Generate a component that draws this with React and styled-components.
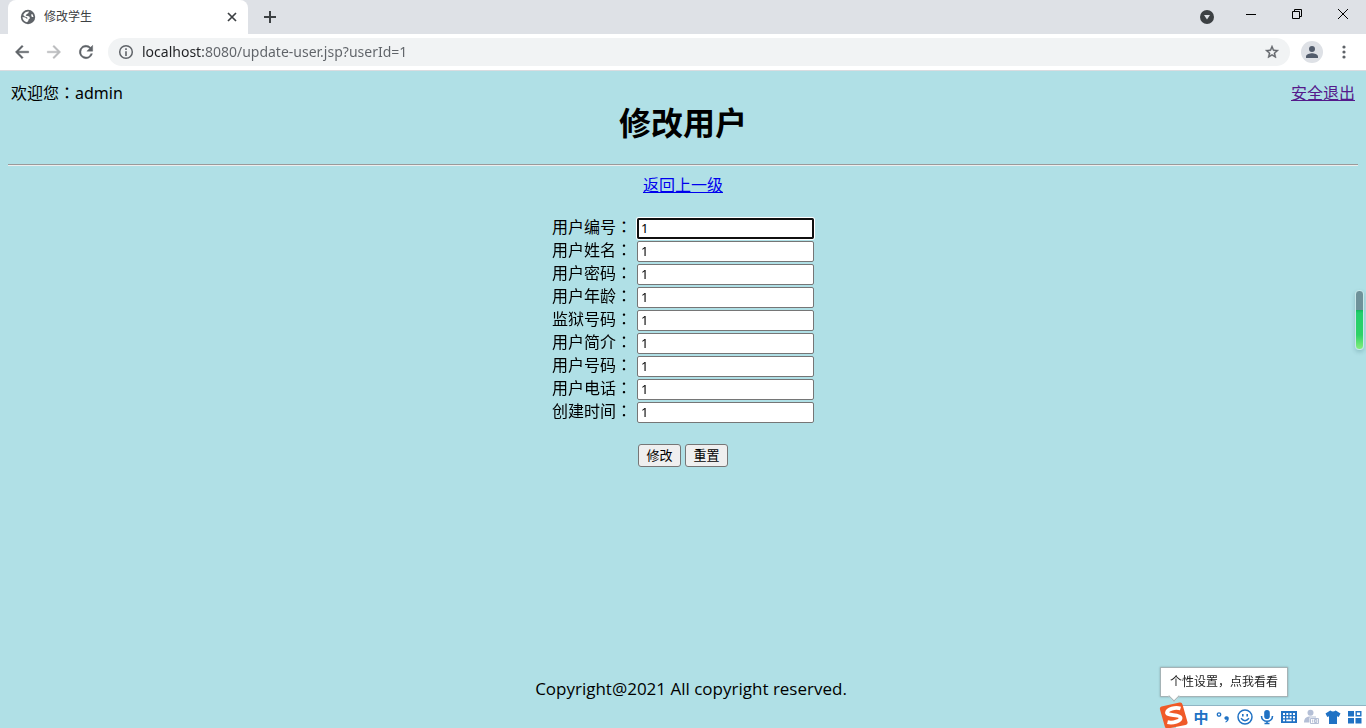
import React from "react";
import styled, { createGlobalStyle } from "styled-components";

const uiFont = `"Noto Sans", "Noto Sans CJK SC", sans-serif`;
const pageFont = `"Noto Sans", "Noto Sans CJK SC", sans-serif`;

const GlobalStyle = createGlobalStyle`
  * { box-sizing: border-box; }
  body { margin: 0; background: #b0e0e6; font-family: ${pageFont}; }
`;

const Window = styled.div`
  display: flex;
  flex-direction: column;
  min-height: 100vh;
`;

const TabStrip = styled.div`
  display: flex;
  height: 34px;
  padding-left: 8px;
  background: #dee1e6;
`;

const Tab = styled.div`
  display: flex;
  align-items: center;
  width: 240px;
  padding: 0 8px 0 12px;
  border-radius: 8px 8px 0 0;
  background: #fff;
  color: #3c4043;
  font: 12px/16px ${uiFont};
`;

const TabTitle = styled.span`
  flex: 1;
  padding-left: 8px;
`;

const IconButton = styled.button`
  display: flex;
  align-items: center;
  justify-content: center;
  flex: none;
  width: ${(p) => p.$width || 16}px;
  height: ${(p) => p.$height || 16}px;
  padding: 0;
  border: 0;
  background: transparent;
  color: inherit;
`;

const TabActions = styled.div`
  display: flex;
  align-items: center;
  flex: 1;
  padding-left: 6px;
  color: #3c4043;
`;

const WindowControls = styled.div`
  display: flex;
  margin-left: auto;
  height: 28px;
  color: #000;
`;

const Toolbar = styled.div`
  display: flex;
  align-items: center;
  gap: 10px;
  height: 37px;
  padding: 0 10px;
  border-bottom: 1px solid #dadce0;
  background: #fff;
  color: #5f6368;
`;

const NavButtons = styled.div`
  display: flex;
  gap: 8px;
`;

const AddressBar = styled.div`
  display: flex;
  align-items: center;
  flex: 1;
  gap: 8px;
  height: 28px;
  padding: 0 10px;
  border-radius: 14px;
  background: #f1f3f4;
`;

const AddressInput = styled.input`
  flex: 1;
  min-width: 0;
  padding: 0;
  border: 0;
  outline: 0;
  background: linear-gradient(90deg, #202124 61px, #5f6368 61px);
  background-clip: text;
  color: transparent;
  font: 14px/20px ${uiFont};
`;

const ToolbarEnd = styled.div`
  display: flex;
  align-items: center;
  gap: 8px;
`;

const Page = styled.main`
  display: flex;
  flex-direction: column;
  flex: 1;
  padding: 8px;
  color: #000;
  font: 16px/22px ${pageFont};
`;

const UserBar = styled.div`
  display: flex;
  justify-content: space-between;
  padding: 3px 3px 0;
`;

const Colon = styled.span`
  font-family: "Noto Sans CJK TC", sans-serif;
  line-height: 1;
`;

const Title = styled.h1`
  margin: 0;
  font: bold 32px/38px ${pageFont};
  text-align: center;
`;

const Rule = styled.hr`
  width: 100%;
  margin: 22px 0 8px;
  border: solid;
  border-width: 1px 0;
  border-color: #9a9a9a transparent #eeeeee;
`;

const Link = styled.a`
  color: ${(p) => (p.$visited ? "#551a8b" : "#0000ee")};
  text-decoration: underline;
`;

const BackRow = styled.div`
  text-align: center;
`;

const Form = styled.form`
  display: flex;
  flex-direction: column;
  align-self: center;
  gap: 2px;
  margin-top: 22px;
`;

const Field = styled.label`
  display: flex;
  align-items: flex-start;
  gap: 5px;
  height: 21px;
`;

const FieldName = styled.span`
  width: 80px;
  line-height: 18px;
  white-space: nowrap;
`;

const TextBox = styled.input`
  width: 177px;
  height: 21px;
  padding: 0 3px 2px;
  border: 1px solid #767676;
  border-radius: 2px;
  background: #fff;
  color: #000;
  font: 13px/16px ${pageFont};
  &:focus {
    outline: 2px solid #101010;
    outline-offset: -2px;
    box-shadow: 0 0 0 1px #fff;
  }
`;

const Actions = styled.div`
  display: flex;
  gap: 4px;
  margin: 19px 0 0 86px;
`;

const Button = styled.button`
  width: 43px;
  height: 23px;
  padding: 0;
  border: 1px solid #767676;
  border-radius: 3px;
  background: #efefef;
  color: #000;
  font: 13px/19px ${pageFont};
`;

const Footer = styled.footer`
  margin-top: auto;
  padding: 0 0 20px 16px;
  font: 17px/22px "Open Sans", sans-serif;
  text-align: center;
`;

const Meter = styled.div`
  position: fixed;
  top: 290px;
  right: 2px;
  width: 9px;
  height: 60px;
  border: 1px solid #c8e8ea;
  border-radius: 4px;
  background: linear-gradient(#6f929a 19px, #12b75c 19px, #22cf6c 22px, #2fd267 44px, #86ee7c);
  box-shadow: 0 2px 4px rgba(0, 60, 70, 0.2);
`;

const ImeBar = styled.div`
  position: fixed;
  right: 0;
  bottom: 0;
  display: flex;
  align-items: center;
  width: 190px;
  height: 23px;
  padding-left: 14px;
  border-top: 1px solid #8fb5c4;
  background: #fff;
  color: #2072c4;
`;

const ImeLogo = styled.svg`
  position: fixed;
  right: 176px;
  bottom: 0;
  width: 32px;
  height: 27px;
`;

const ImeMode = styled.button`
  width: 22px;
  height: 22px;
  padding: 0;
  border: 0;
  background: transparent;
  color: inherit;
  font: bold 15px/20px "Noto Sans CJK SC", sans-serif;
`;

const Tooltip = styled.div`
  position: fixed;
  right: 78px;
  bottom: 31px;
  width: 128px;
  height: 30px;
  padding-left: 9px;
  border: 1px solid #a5b3b6;
  background: #fff;
  box-shadow: 0 0 2px rgba(0, 0, 0, 0.25);
  color: #222;
  font: 12px/28px ${uiFont};
  white-space: nowrap;
  &::after {
    content: "";
    position: absolute;
    left: 9px;
    bottom: -4px;
    width: 7px;
    height: 7px;
    border: solid #a5b3b6;
    border-width: 0 1px 1px 0;
    background: #fff;
    transform: rotate(45deg);
  }
`;

const Icon = ({ size = 16, box = "0 0 24 24", children, ...rest }) => (
  <svg width={size} height={size} viewBox={box} fill="currentColor" aria-hidden="true" {...rest}>
    {children}
  </svg>
);

const stroke = { fill: "none", stroke: "currentColor" };

const fields = [
  ["userId", "用户编号"],
  ["userName", "用户姓名"],
  ["password", "用户密码"],
  ["age", "用户年龄"],
  ["prisonNo", "监狱号码"],
  ["intro", "用户简介"],
  ["number", "用户号码"],
  ["phone", "用户电话"],
  ["createTime", "创建时间"],
];

function BrowserTabs() {
  return (
    <TabStrip>
      <Tab>
        <Icon box="0 0 16 16">
          <circle cx="8" cy="8" r="7.2" fill="#5f6368" />
          <path d="M9 2.6 8.200 4.300 6.500 5.200 5.700 6.700 7.600 7.100 9.300 7.500 10 9.200 8.700 10.300 8.200 12.100 7 13.200Q2.500 12 2.500 8L5.300 8.400 6.800 9.800 7.700 9.300 6.900 8.200 4.700 7.600 3.200 6Q4.800 2.600 9 2.600ZM11 5.600 12.600 5.200 13.500 8 11.800 8Z" fill="#fff" />
        </Icon>
        <TabTitle>修改学生</TabTitle>
        <IconButton type="button" aria-label="关闭标签页">
          <Icon box="0 0 16 16"><path d="m4 4 8 8M12 4l-8 8" {...stroke} strokeWidth="1.7" /></Icon>
        </IconButton>
      </Tab>
      <TabActions>
        <IconButton type="button" aria-label="新标签页" $width={32} $height={28}>
          <Icon box="0 0 16 16"><path d="M8 2v12M2 8h12" {...stroke} strokeWidth="2" /></Icon>
        </IconButton>
      </TabActions>
      <WindowControls>
        <IconButton type="button" aria-label="搜索标签页" $width={42} $height={34}>
          <Icon box="0 0 16 16"><circle cx="8" cy="8" r="7" fill="#3c4043" /><path d="M5 6h6l-3 4.500z" fill="#dee1e6" /></Icon>
        </IconButton>
        <IconButton type="button" aria-label="最小化" $width={46} $height={28}>
          <Icon box="0 0 16 16"><path d="M3 8.500h10" {...stroke} /></Icon>
        </IconButton>
        <IconButton type="button" aria-label="还原" $width={46} $height={28}>
          <Icon box="0 0 16 16"><path d="M3.500 5.500h7v7h-7zM5.500 5.500v-2h7v7h-2" {...stroke} /></Icon>
        </IconButton>
        <IconButton type="button" aria-label="关闭" $width={46} $height={28}>
          <Icon box="0 0 16 16"><path d="m3 3 10 10M13 3 3 13" {...stroke} /></Icon>
        </IconButton>
      </WindowControls>
    </TabStrip>
  );
}

function BrowserToolbar() {
  return (
    <Toolbar>
      <NavButtons>
        <IconButton type="button" aria-label="后退" $width={24} $height={24}>
          <Icon size={20}><path d="M20 11H7.830l5.590-5.590L12 4l-8 8 8 8 1.410-1.410L7.830 13H20z" stroke="currentColor" strokeWidth=".5" /></Icon>
        </IconButton>
        <IconButton type="button" aria-label="前进" $width={24} $height={24}>
          <Icon size={20} color="#babcbe"><path d="m12 4-1.410 1.410L16.170 11H4v2h12.170l-5.580 5.590L12 20l8-8z" stroke="currentColor" strokeWidth=".5" /></Icon>
        </IconButton>
        <IconButton type="button" aria-label="重新加载" $width={24} $height={24}>
          <Icon size={20}><path d="M17.650 6.350A8 8 0 1 0 19.730 14h-2.080A6 6 0 1 1 12 6c1.660 0 3.140.69 4.220 1.780L13 11h7V4z" stroke="currentColor" strokeWidth=".5" /></Icon>
        </IconButton>
      </NavButtons>
      <AddressBar>
        <Icon box="0 0 16 16"><circle cx="8" cy="8" r="6.300" {...stroke} strokeWidth="1.500" /><path d="M7.200 7.200h1.600V12H7.200zM7.200 4.300h1.600v1.600H7.200z" /></Icon>
        <AddressInput aria-label="地址栏" defaultValue="localhost:8080/update-user.jsp?userId=1" />
        <Icon><path d="m22 9.240-7.190-.62L12 2 9.190 8.630 2 9.240l5.460 4.730L5.820 21 12 17.270 18.180 21l-1.630-7.030zM12 15.400l-3.760 2.270 1-4.280-3.320-2.880 4.380-.38L12 6.100l1.710 4.040 4.380.38-3.320 2.880 1 4.280z" stroke="currentColor" strokeWidth=".6" /></Icon>
      </AddressBar>
      <ToolbarEnd>
        <IconButton type="button" aria-label="个人资料" $width={24} $height={22}>
          <Icon size={22} box="0 0 22 22"><circle cx="11" cy="11" r="11" fill="#dee1e6" /><path d="M11 5a3 3 0 1 1 0 6 3 3 0 0 1 0-6ZM5 17v-1.500c0-2 4-3.200 6-3.200s6 1.200 6 3.200V17z" fill="#525c6c" /></Icon>
        </IconButton>
        <IconButton type="button" aria-label="菜单" $width={24} $height={24}>
          <Icon box="0 0 16 16"><circle cx="8" cy="3" r="1.600" /><circle cx="8" cy="8" r="1.600" /><circle cx="8" cy="13" r="1.600" /></Icon>
        </IconButton>
      </ToolbarEnd>
    </Toolbar>
  );
}

const imeTools = [
  ["中英文标点", <g key="p"><circle cx="4" cy="5.500" r="1.700" {...stroke} strokeWidth="1.300" /><path d="M10.500 7.500c2.500-.6 3.700.8 3.200 2.700-.4 1.700-1.500 2.800-3 3.200l-.4-.9c1-.4 1.500-.9 1.600-1.700-2.700.2-3.200-2.600-1.400-3.300Z" /></g>],
  ["表情", <g key="s"><circle cx="8" cy="8" r="7" {...stroke} strokeWidth="1.500" /><path d="M5 5h1.600v2.500H5zM9.400 5H11v2.500H9.400z" /><path d="M4 9.300q4 4.800 8 0" {...stroke} strokeWidth="1.400" /></g>],
  ["语音", <g key="m"><rect x="5.200" y="1" width="5.600" height="9" rx="2.800" /><path d="M2.500 7c0 7 11 7 11 0M8 12v3M5.500 14.500h5" {...stroke} strokeWidth="1.600" /></g>],
  ["键盘", <g key="k"><path fillRule="evenodd" d="M0 2h16v12H0ZM2 4v2h2V4ZM5.300 4v2h2V4ZM8.600 4v2h2V4ZM12 4v2h2V4ZM2 7.200v2h2v-2ZM5.300 7.200v2h2v-2ZM8.600 7.200v2h2v-2ZM12 7.200v2h2v-2ZM2 10.500v1.700h2v-1.700ZM5.300 10.500v1.700h5.300v-1.700ZM12 10.500v1.700h2v-1.700Z" /></g>],
  ["青少年模式", <g key="a" color="#b4bfd6"><circle cx="7.500" cy="3.700" r="3" fill="currentColor" /><path d="M1 13.500C1 9 4 7.500 7 7.500h6v1H6.500v5Z" fill="currentColor" /><path d="M7.500 9.500h8v5h-8zM9.700 10.500v3M11.500 10.500h2.300v3h-2.300zM11.500 12h2.300" {...stroke} /></g>],
  ["皮肤", <path key="t" d="M5.300 1.500q2.700 2 5.400 0L15.500 4.500 13.700 8 12 7.300V15H4V7.300L2.300 8 .5 4.500Z" />],
  ["工具箱", <g key="g"><path d="M1 2h6v5.500H1zM1 9h6v5.500H1zM8.500 9h6v5.500h-6z" /><path d="M9.200 2.700h4.600v4.100H9.200z" {...stroke} strokeWidth="1.400" /></g>],
];

function InputMethod() {
  return (
    <>
      <Tooltip role="tooltip">个性设置，点我看看</Tooltip>
      <ImeBar>
        <ImeMode type="button">中</ImeMode>
        {imeTools.map(([name, drawing]) => (
          <IconButton key={name} type="button" aria-label={name} $width={22} $height={22}>
            <Icon box="0 0 16 16">{drawing}</Icon>
          </IconButton>
        ))}
      </ImeBar>
      <ImeLogo viewBox="0 0 32 27" aria-hidden="true">
        <path d="M3.500 5.500 21.500 1.500q2.500-.5 3 2L29.500 21q.6 2.500-2 3L10 27.500q-2.500.5-3.200-2L2 8.500q-.6-2.500 1.500-3Z" fill="#f05a28" />
        <path d="M22.500 7.500C17 6 9.500 8 9 11.500c-.4 3.500 12.500 1.500 13.500 5 .8 3.500-7.500 6-13 4.700" fill="none" stroke="#fff" strokeWidth="3.800" />
      </ImeLogo>
    </>
  );
}

export default function App() {
  return (
    <Window>
      <GlobalStyle />
      <BrowserTabs />
      <BrowserToolbar />
      <Page>
        <UserBar>
          <span>欢迎您<Colon>：</Colon>admin</span>
          <Link href="#logout" $visited>安全退出</Link>
        </UserBar>
        <Title>修改用户</Title>
        <Rule />
        <BackRow><Link href="#back">返回上一级</Link></BackRow>
        <Form>
          {fields.map(([id, name], i) => (
            <Field key={id} htmlFor={id}>
              <FieldName>{name}<Colon>：</Colon></FieldName>
              <TextBox id={id} name={id} defaultValue="1" autoFocus={i === 0} />
            </Field>
          ))}
          <Actions>
            <Button type="submit">修改</Button>
            <Button type="reset">重置</Button>
          </Actions>
        </Form>
        <Footer>Copyright@2021 All copyright reserved.</Footer>
      </Page>
      <Meter />
      <InputMethod />
    </Window>
  );
}
